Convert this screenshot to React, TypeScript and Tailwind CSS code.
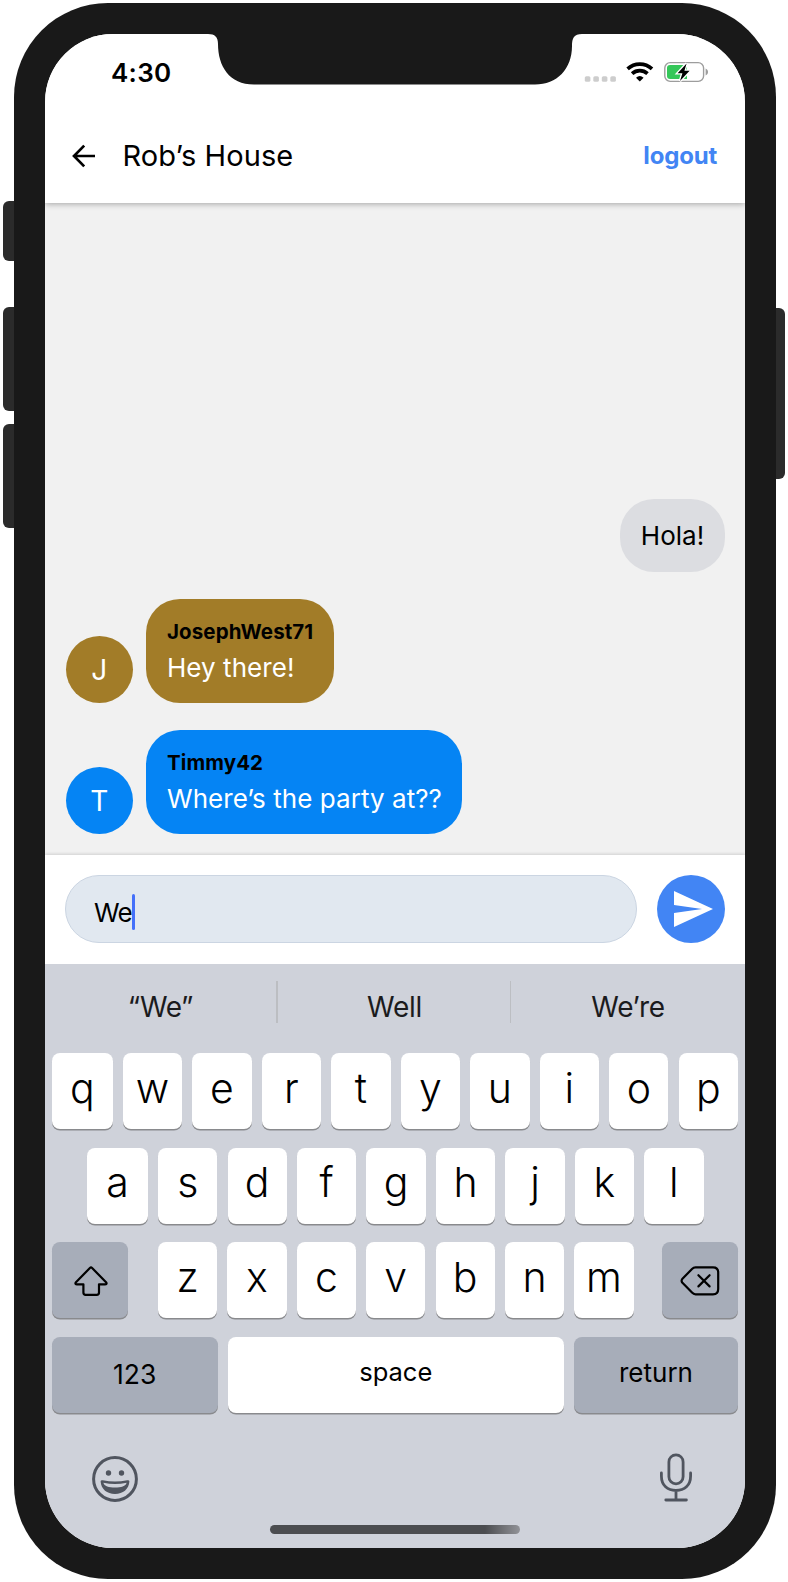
import type { ReactNode } from "react";

const sans = "font-['Inter','Liberation_Sans',sans-serif]";

function Notch() {
  return (
    <svg className="absolute left-[160px] top-0" width="380" height="52" viewBox="0 0 380 52">
      <path
        d="M0 0H3C10 0 13 3 13 10C13 32 24 50.5 49 50.5H330C352 50.5 367 35 367 12C367 4 369 0 377 0H380V0Z"
        fill="#191919"
      />
    </svg>
  );
}

function StatusBar() {
  return (
    <div className="flex h-[74px] items-start justify-between pl-[66px] pr-[36px]">
      <span className="mt-[23px] text-[26px] font-semibold leading-[32px] tracking-[0.3px] text-black">4:30</span>
      <div className="mt-[27px] flex h-[22px]">
        <svg width="126" height="22" viewBox="0 0 126 22">
          <g fill="#cdcdcd">
            <rect x="1.8" y="15.2" width="5.6" height="5.6" rx="1.6" />
            <rect x="10.3" y="15.2" width="5.6" height="5.6" rx="1.6" />
            <rect x="18.8" y="15.2" width="5.6" height="5.6" rx="1.6" />
            <rect x="27.3" y="15.2" width="5.6" height="5.6" rx="1.6" />
          </g>
          <g fill="none" stroke="#000" strokeWidth="3.7">
            <path d="M44.6 7.9A18 18 0 0 1 69 7.9" />
            <path d="M49.1 12.7A11.4 11.4 0 0 1 64.5 12.7" />
          </g>
          <path d="M56.8 20.6L53 16.7A5.8 5.8 0 0 1 60.6 16.7Z" fill="#000" />
          <rect x="81.8" y="1.6" width="38.8" height="18.8" rx="5.4" fill="none" stroke="#9d9d9d" strokeWidth="1.4" />
          <path d="M122.6 7.6C124.3 8.4 125 9.6 125 11S124.3 13.6 122.6 14.4Z" fill="#9d9d9d" />
          <path d="M87 4H104V18H87A3 3 0 0 1 84 15V7A3 3 0 0 1 87 4Z" fill="#34c759" />
          <path
            d="M103.6 2.4L94.6 12.2H99.4L97 20L106.6 9.8H101.4Z"
            fill="#000"
            stroke="#fff"
            strokeWidth="2.6"
            paintOrder="stroke"
          />
        </svg>
      </div>
    </div>
  );
}

function Header() {
  return (
    <header className="relative z-10 h-[169px] shrink-0 bg-white shadow-[0_1px_6px_rgba(0,0,0,0.32)]">
      <StatusBar />
      <div className="flex h-[95px] items-center pl-[27px] pr-[28px]">
        <svg width="24" height="24" viewBox="0 0 24 24" fill="none" stroke="#000" strokeWidth="2.7">
          <path d="M23 12H2.2M12.2 1.6L2 12L12.2 22.4" />
        </svg>
        <h1 className="ml-[26.5px] text-[29px] leading-[34px] tracking-[0.1px] text-black">Rob’s House</h1>
        <button className="ml-auto text-[24px] font-bold leading-[30px] tracking-[-0.2px] text-[#4285f4]">logout</button>
      </div>
    </header>
  );
}

type MessageProps = { initial: string; name: string; text: string; color: string; width: string };

function Message({ initial, name, text, color, width }: MessageProps) {
  return (
    <div className="flex items-end">
      <div className={`flex h-[67.5px] w-[67.5px] items-center justify-center rounded-full pt-px text-[28px] text-white ${color}`}>
        {initial}
      </div>
      <div className={`ml-[13px] flex h-[104px] flex-col rounded-[34px] pl-[21px] pt-[21px] ${width} ${color}`}>
        <span className="text-[20.5px] font-bold leading-[24px] tracking-[0.1px] text-black">{name}</span>
        <span className="mt-[7.5px] whitespace-nowrap text-[26px] leading-[32px] tracking-[0.05px] text-white">{text}</span>
      </div>
    </div>
  );
}

function Chat() {
  return (
    <main className="flex flex-1 flex-col justify-end bg-[#f1f1f1] pb-[21px] pl-[20.5px] pr-5">
      <div className="mb-[27px] flex h-[73px] w-[105px] items-center justify-center self-end rounded-[34px] bg-[#dcdde1] text-[26px] text-black">
        Hola!
      </div>
      <div className="flex flex-col gap-[27px]">
        <Message initial="J" name="JosephWest71" text="Hey there!" color="bg-[#a27c28]" width="w-[188px]" />
        <Message initial="T" name="Timmy42" text="Where’s the party at??" color="bg-[#0584f4]" width="w-[316px]" />
      </div>
    </main>
  );
}

function Composer() {
  return (
    <div className="flex h-[108.5px] shrink-0 items-center justify-between bg-white px-5 shadow-[0_-1px_3px_rgba(0,0,0,0.14)]">
      <div className="flex h-[68px] w-[572px] items-center rounded-full border border-[#cbd5e2] bg-[#e1e8f0] pl-[28px]">
        <span className="mt-[8px] text-[26px] leading-[32px] tracking-[-0.9px] text-black">We</span>
        <span className="mt-[5px] h-[36px] w-[3px] rounded-sm bg-[#4470fa]" />
      </div>
      <button className="flex h-[68px] w-[68px] items-center rounded-full bg-[#4285f4] pb-px pl-[17px]">
        <svg width="39" height="36" viewBox="0 0 39 36">
          <path d="M0 0L39 18L0 36V22L28 18L0 14Z" fill="#fff" />
        </svg>
      </button>
    </div>
  );
}

const letterKey = "flex-1 bg-white pb-[5px] text-[41px] font-light";
const leadingKey = "w-[60.6px] bg-white pb-[5px] text-[41px] font-light";

function Key({ children, className = letterKey }: { children: ReactNode; className?: string }) {
  return (
    <div
      className={`flex h-[76px] items-center justify-center rounded-[8px] text-black shadow-[0_1.5px_0_#898a8d] ${className}`}
    >
      {children}
    </div>
  );
}

function Keyboard() {
  return (
    <div className="flex h-[584.5px] shrink-0 flex-col bg-[#cfd2da]">
      <div className="flex h-[89.5px] items-center pb-[3px] text-[28px] tracking-[-0.3px] text-[#1b1b1d]">
        <span className="w-[231px] text-center">“We”</span>
        <span className="-mt-[10px] h-[42px] w-[1.5px] bg-[#bcbec2]" />
        <span className="w-[232px] pl-[2px] text-center">Well</span>
        <span className="-mt-[10px] h-[42px] w-[1.5px] bg-[#bcbec2]" />
        <span className="w-[234px] text-center">We’re</span>
      </div>
      <div className="flex flex-col gap-[18.5px]">
        <div className="flex gap-[10.2px] px-[7px]">
          {"qwertyuiop".split("").map((k, i) => (
            <Key key={k} className={i === 0 ? leadingKey : letterKey}>{k}</Key>
          ))}
        </div>
        <div className="flex gap-[10.2px] pl-[42.3px] pr-[41.5px]">
          {"asdfghjkl".split("").map((k, i) => (
            <Key key={k} className={i === 0 ? leadingKey : letterKey}>{k}</Key>
          ))}
        </div>
        <div className="flex px-[7px]">
          <Key className="w-[76px] bg-[#a7adb9]">
            <svg className="ml-[2px] mt-[2px]" width="34" height="30" viewBox="0 0 34 30" fill="none" stroke="#000" strokeWidth="2.2" strokeLinejoin="round">
              <path d="M15.9 2Q17 .9 18.1 2L32.3 16.5Q33.2 18.3 31 18.3H25V26.5Q25 28.8 22.7 28.8H11.7Q9.4 28.8 9.4 26.5V18.3H3Q.8 18.3 1.7 16.5Z" />
            </svg>
          </Key>
          <div className="ml-[30px] flex w-[475.5px] gap-[10.2px]">
            {"zxcvbnm".split("").map((k) => (
              <Key key={k}>{k}</Key>
            ))}
          </div>
          <Key className="ml-auto w-[76px] bg-[#a7adb9]">
            <svg className="mt-[2px]" width="40" height="30" viewBox="0 0 40 30" fill="none" stroke="#000" strokeWidth="2.2" strokeLinejoin="round" strokeLinecap="round">
              <path d="M15.5 1.3H33Q38.2 1.3 38.2 6.5V23Q38.2 28.3 33 28.3H15.5Q13.6 28.3 12 26.6L2.2 16.5Q1 14.8 2.2 13L12 3Q13.6 1.3 15.5 1.3Z" />
              <path d="M18.4 9.2L29.6 20.4M29.6 9.2L18.4 20.4" />
            </svg>
          </Key>
        </div>
        <div className="flex gap-[10.2px] px-[7px]">
          <Key className="w-[165.5px] bg-[#a7adb9] pt-px text-[26.5px]">123</Key>
          <Key className="flex-1 bg-white pb-[4px] text-[25.5px]">space</Key>
          <Key className="w-[164px] bg-[#a7adb9] pb-[4px] text-[26px]">return</Key>
        </div>
      </div>
      <div className="mt-[40.5px] flex h-[50px] justify-between pl-[47px] pr-[52px]">
        <svg className="mt-[3px]" width="46" height="46" viewBox="0 0 46 46">
          <circle cx="23" cy="23" r="21.4" fill="none" stroke="#50555f" strokeWidth="3" />
          <circle cx="16.5" cy="17" r="2.7" fill="#50555f" />
          <circle cx="29.5" cy="17" r="2.7" fill="#50555f" />
          <path d="M8.6 25.6Q8.6 23.8 10.8 24.2Q23 27 35.2 24.2Q37.4 23.8 37.4 25.6C36.8 33.4 31 38 23 38S9.2 33.4 8.6 25.6Z" fill="#50555f" />
          <path d="M11.4 26.8Q23 29.4 34.6 26.8C33.8 30.4 29 31.5 23 31.5S12.2 30.4 11.4 26.8Z" fill="#cfd2da" />
        </svg>
        <svg width="34" height="50" viewBox="0 0 34 50" fill="none" stroke="#50555f" strokeWidth="2.8" strokeLinecap="round">
          <rect x="9.9" y="1.8" width="14.2" height="29" rx="7.1" />
          <path d="M2.4 20V23C2.4 32.5 8.6 37.5 17 37.5S31.6 32.5 31.6 23V20M17 37.5V47M6.8 47H27.4" />
        </svg>
      </div>
      <div className="ml-[225px] mt-[21.5px] h-[9px] w-[250px] rounded-full bg-[linear-gradient(90deg,#4c4d50_0%,#4c4d50_86%,#929398_100%)]" />
    </div>
  );
}

export default function App() {
  return (
    <div className={`flex h-[1582px] w-[788px] overflow-hidden bg-white ${sans}`}>
      <div className="flex w-[14px] flex-col pl-[3px]">
        <div className="mt-[201px] h-[60px] rounded-l-[6px] bg-[#2b2b2b]" />
        <div className="mt-[46px] h-[104px] rounded-l-[6px] bg-[#2b2b2b]" />
        <div className="mt-[13px] h-[104px] rounded-l-[6px] bg-[#2b2b2b]" />
      </div>
      <div className="mt-[3px] h-[1576px] w-[762px] rounded-[94px] bg-[#191919] px-[31px] pt-[31px]">
        <div className="relative flex h-[1514px] w-[700px] flex-col overflow-hidden rounded-[68px] bg-white">
          <Header />
          <Chat />
          <Composer />
          <Keyboard />
          <div className="absolute left-0 top-0 z-20">
            <Notch />
          </div>
        </div>
      </div>
      <div className="flex w-[9px] flex-col">
        <div className="mt-[308px] h-[171px] rounded-r-[6px] bg-[#2b2b2b]" />
      </div>
    </div>
  );
}
